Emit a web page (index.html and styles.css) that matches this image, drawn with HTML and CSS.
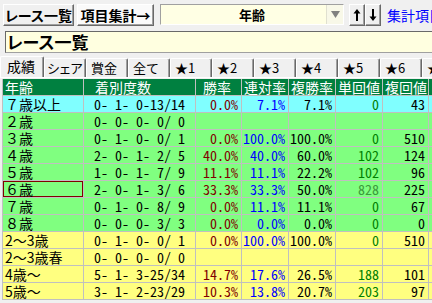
FILE: index.html
```html
<!DOCTYPE html>
<html lang="ja">
  <head>
    <meta charset="UTF-8" />
    <meta name="viewport" content="width=device-width, initial-scale=1.0" />
    <title>項目集計</title>
    <link rel="stylesheet" href="styles.css">
  </head>
  <body>
    <div class="toolbar">
      <button class="btn btn-list">レース一覧</button>
      <button class="btn btn-sum">項目集計→</button>
      <div class="combo">
        <span class="combo-text">年齢</span>
        <span class="combo-arrow">
          <svg width="9" height="7" viewBox="0 0 9 7"><path d="M0 0H9L4.5 7Z" fill="#808080"/></svg>
        </span>
      </div>
      <button class="btn btn-arrow" title="上へ">
        <svg width="8" height="14" viewBox="0 0 8 14"><path d="M4 1L0.5 5.5H3V13H5V5.5H7.5Z" fill="#000"/></svg>
      </button>
      <button class="btn btn-arrow" title="下へ">
        <svg width="8" height="14" viewBox="0 0 8 14"><path d="M4 13L0.5 8.5H3V1H5V8.5H7.5Z" fill="#000"/></svg>
      </button>
      <a class="link" href="#">集計項目</a>
    </div>

    <div class="title">レース一覧</div>

    <div class="tabs">
      <span class="tab active">成績</span>
      <span class="tab tab-kana">シェア</span>
      <span class="tab">賞金</span>
      <span class="tab">全て</span>
      <span class="tab">★1</span>
      <span class="tab">★2</span>
      <span class="tab">★3</span>
      <span class="tab">★4</span>
      <span class="tab">★5</span>
      <span class="tab">★6</span>
      <span class="tab">★</span>
    </div>

    <div class="panel">
      <table class="grid">
        <colgroup>
          <col class="c-name" />
          <col class="c-count" />
          <col class="c-num46" />
          <col class="c-num47" />
          <col class="c-num47" />
          <col class="c-num47" />
          <col class="c-num46" />
          <col class="c-rest" />
        </colgroup>
        <thead>
          <tr>
            <th>年齢</th>
            <th class="h-count">着別度数</th>
            <th class="h-win">勝率</th>
            <th>連対率</th>
            <th>複勝率</th>
            <th>単回値</th>
            <th>複回値</th>
            <th></th>
          </tr>
        </thead>
        <tbody>
          <tr class="cyan">
            <td>７歳以上</td><td class="cnt">0- 1- 0-13/14</td>
            <td class="win">0.0%</td><td class="ren">7.1%</td><td>7.1%</td><td class="tan">0</td><td>43</td><td></td>
          </tr>
          <tr class="green">
            <td>２歳</td><td class="cnt">0- 0- 0- 0/ 0</td>
            <td></td><td></td><td></td><td></td><td></td><td></td>
          </tr>
          <tr class="green">
            <td>３歳</td><td class="cnt">0- 1- 0- 0/ 1</td>
            <td class="win">0.0%</td><td class="ren">100.0%</td><td>100.0%</td><td class="tan">0</td><td>510</td><td></td>
          </tr>
          <tr class="green">
            <td>４歳</td><td class="cnt">2- 0- 1- 2/ 5</td>
            <td class="win">40.0%</td><td class="ren">40.0%</td><td>60.0%</td><td class="tan">102</td><td>124</td><td></td>
          </tr>
          <tr class="green">
            <td>５歳</td><td class="cnt">1- 0- 1- 7/ 9</td>
            <td class="win">11.1%</td><td class="ren">11.1%</td><td>22.2%</td><td class="tan">102</td><td>96</td><td></td>
          </tr>
          <tr class="green">
            <td class="selected">６歳</td><td class="cnt">2- 0- 1- 3/ 6</td>
            <td class="win">33.3%</td><td class="ren">33.3%</td><td>50.0%</td><td class="tan high">828</td><td>225</td><td></td>
          </tr>
          <tr class="green">
            <td>７歳</td><td class="cnt">0- 1- 0- 8/ 9</td>
            <td class="win">0.0%</td><td class="ren">11.1%</td><td>11.1%</td><td class="tan">0</td><td>67</td><td></td>
          </tr>
          <tr class="green">
            <td>８歳</td><td class="cnt">0- 0- 0- 3/ 3</td>
            <td class="win">0.0%</td><td class="ren">0.0%</td><td>0.0%</td><td class="tan">0</td><td>0</td><td></td>
          </tr>
          <tr class="yellow">
            <td>2～3歳</td><td class="cnt">0- 1- 0- 0/ 1</td>
            <td class="win">0.0%</td><td class="ren">100.0%</td><td>100.0%</td><td class="tan">0</td><td>510</td><td></td>
          </tr>
          <tr class="yellow">
            <td>2～3歳春</td><td class="cnt">0- 0- 0- 0/ 0</td>
            <td></td><td></td><td></td><td></td><td></td><td></td>
          </tr>
          <tr class="yellow">
            <td>4歳～</td><td class="cnt">5- 1- 3-25/34</td>
            <td class="win">14.7%</td><td class="ren">17.6%</td><td>26.5%</td><td class="tan">188</td><td>101</td><td></td>
          </tr>
          <tr class="yellow">
            <td>5歳～</td><td class="cnt">3- 1- 2-23/29</td>
            <td class="win">10.3%</td><td class="ren">13.8%</td><td>20.7%</td><td class="tan">203</td><td>97</td><td></td>
          </tr>
        </tbody>
      </table>
    </div>
  </body>
</html>
```

FILE: styles.css
```css
body {
  margin: 0;
  background: #f0f0f0;
  font-family: "Noto Sans CJK JP", "Noto Sans", sans-serif;
  font-size: 14px;
  overflow: hidden;
  width: 432px;
  height: 303px;
}

.toolbar {
  display: flex;
  align-items: flex-start;
  height: 22px;
  padding: 4px 0 0 3px;
  white-space: nowrap;
}
.btn {
  flex-shrink: 0;
  height: 22px;
  margin: 0;
  padding: 0;
  background: #f0f0f0;
  border: 1px solid;
  border-color: #fff #696969 #696969 #fff;
  box-shadow: inset -1px -1px 0 #a0a0a0;
  font-family: inherit;
  font-size: 14px;
  font-weight: bold;
  line-height: 18px;
  color: #000;
  font-feature-settings: "palt" 1;
}
.btn-list {
  width: 71px;
}
.btn-sum {
  width: 77px;
  margin-left: 3px;
  background: #fafafa;
}
.btn-arrow {
  width: 16px;
  display: flex;
  align-items: center;
  justify-content: center;
}
.combo {
  flex-shrink: 0;
  display: flex;
  width: 184px;
  height: 21px;
  margin: 0 5px 0 6px;
  box-sizing: border-box;
  background: #ffffe4;
  border: 1px solid;
  border-color: #a0a0a0 #fff #fff #a0a0a0;
}
.combo-text {
  flex: 1;
  padding-left: 17px;
  text-align: center;
  font-size: 13px;
  font-weight: bold;
  line-height: 19px;
}
.combo-arrow {
  width: 16px;
  display: flex;
  align-items: center;
  justify-content: center;
  background: #f8f8e8;
  border-left: 1px solid #e0e0d0;
}
.link {
  margin-left: 6px;
  color: #0000ff;
  text-decoration: none;
  font-size: 14px;
  line-height: 22px;
}

.title {
  height: 22px;
  margin: 5px 0 0 5px;
  box-sizing: border-box;
  padding-left: 1px;
  background: #ffffe0;
  border-top: 1px solid #696969;
  border-left: 1px solid #696969;
  border-bottom: 1px solid #a0a0a0;
  font-size: 17px;
  font-weight: bold;
  line-height: 20px;
  font-feature-settings: "palt" 1;
}

.tabs {
  display: flex;
  align-items: flex-end;
  height: 21px;
  margin-top: 3px;
  white-space: nowrap;
}
.tab {
  flex-shrink: 0;
  width: 42px;
  height: 19px;
  box-sizing: border-box;
  padding-left: 4px;
  background: #f0f0f0;
  border-top: 1px solid #fff;
  border-left: 1px solid #fff;
  border-right: 1px solid #696969;
  border-radius: 2px 2px 0 0;
  box-shadow: inset -1px 0 0 #a0a0a0;
  font-size: 13px;
  line-height: 18px;
}
.tab-kana {
  padding-left: 2px;
  letter-spacing: -1.5px;
}
.tab.active {
  width: 44px;
  height: 21px;
  padding-left: 6px;
  font-size: 14px;
  line-height: 19px;
}

.panel {
  border-top: 1px solid #fff;
  padding: 1px 0 0 2px;
}
.grid {
  table-layout: fixed;
  width: 440px;
  border-collapse: separate;
  border-spacing: 0;
}
.c-name { width: 82px; }
.c-count { width: 112px; }
.c-num46 { width: 46px; }
.c-num47 { width: 47px; }
.c-rest { width: 15px; }

.grid th,
.grid td {
  height: 16px;
  padding: 0 3px 0 0;
  border-right: 1px solid #c0c0c0;
  border-bottom: 1px solid #c0c0c0;
  line-height: 16px;
  white-space: pre;
  overflow: hidden;
  text-align: right;
  font-weight: normal;
  font-feature-settings: "hwid" 1;
}
.grid th:first-child,
.grid td:first-child {
  border-left: 1px solid #c0c0c0;
  padding-left: 2px;
  text-align: left;
}
.grid th,
.grid td:first-child {
  font-feature-settings: normal;
}
.grid th {
  background: #008040;
  color: #fff;
  text-align: left;
  padding-left: 2px;
}
.grid th.h-count { padding-left: 11px; }
.grid th.h-win { padding-left: 7px; }

.grid .cnt {
  text-align: center;
  padding: 0;
}
.grid .win { color: #800000; }
.grid .ren { color: #0000ff; }
.grid .tan { color: #008000; }
.grid .tan.high { color: #3c9a3c; }
.grid .selected {
  box-shadow: inset 0 0 0 1px #800000;
}

.cyan td { background: #80ffff; }
.green td { background: #80ff80; }
.yellow td { background: #ffff80; }
```
